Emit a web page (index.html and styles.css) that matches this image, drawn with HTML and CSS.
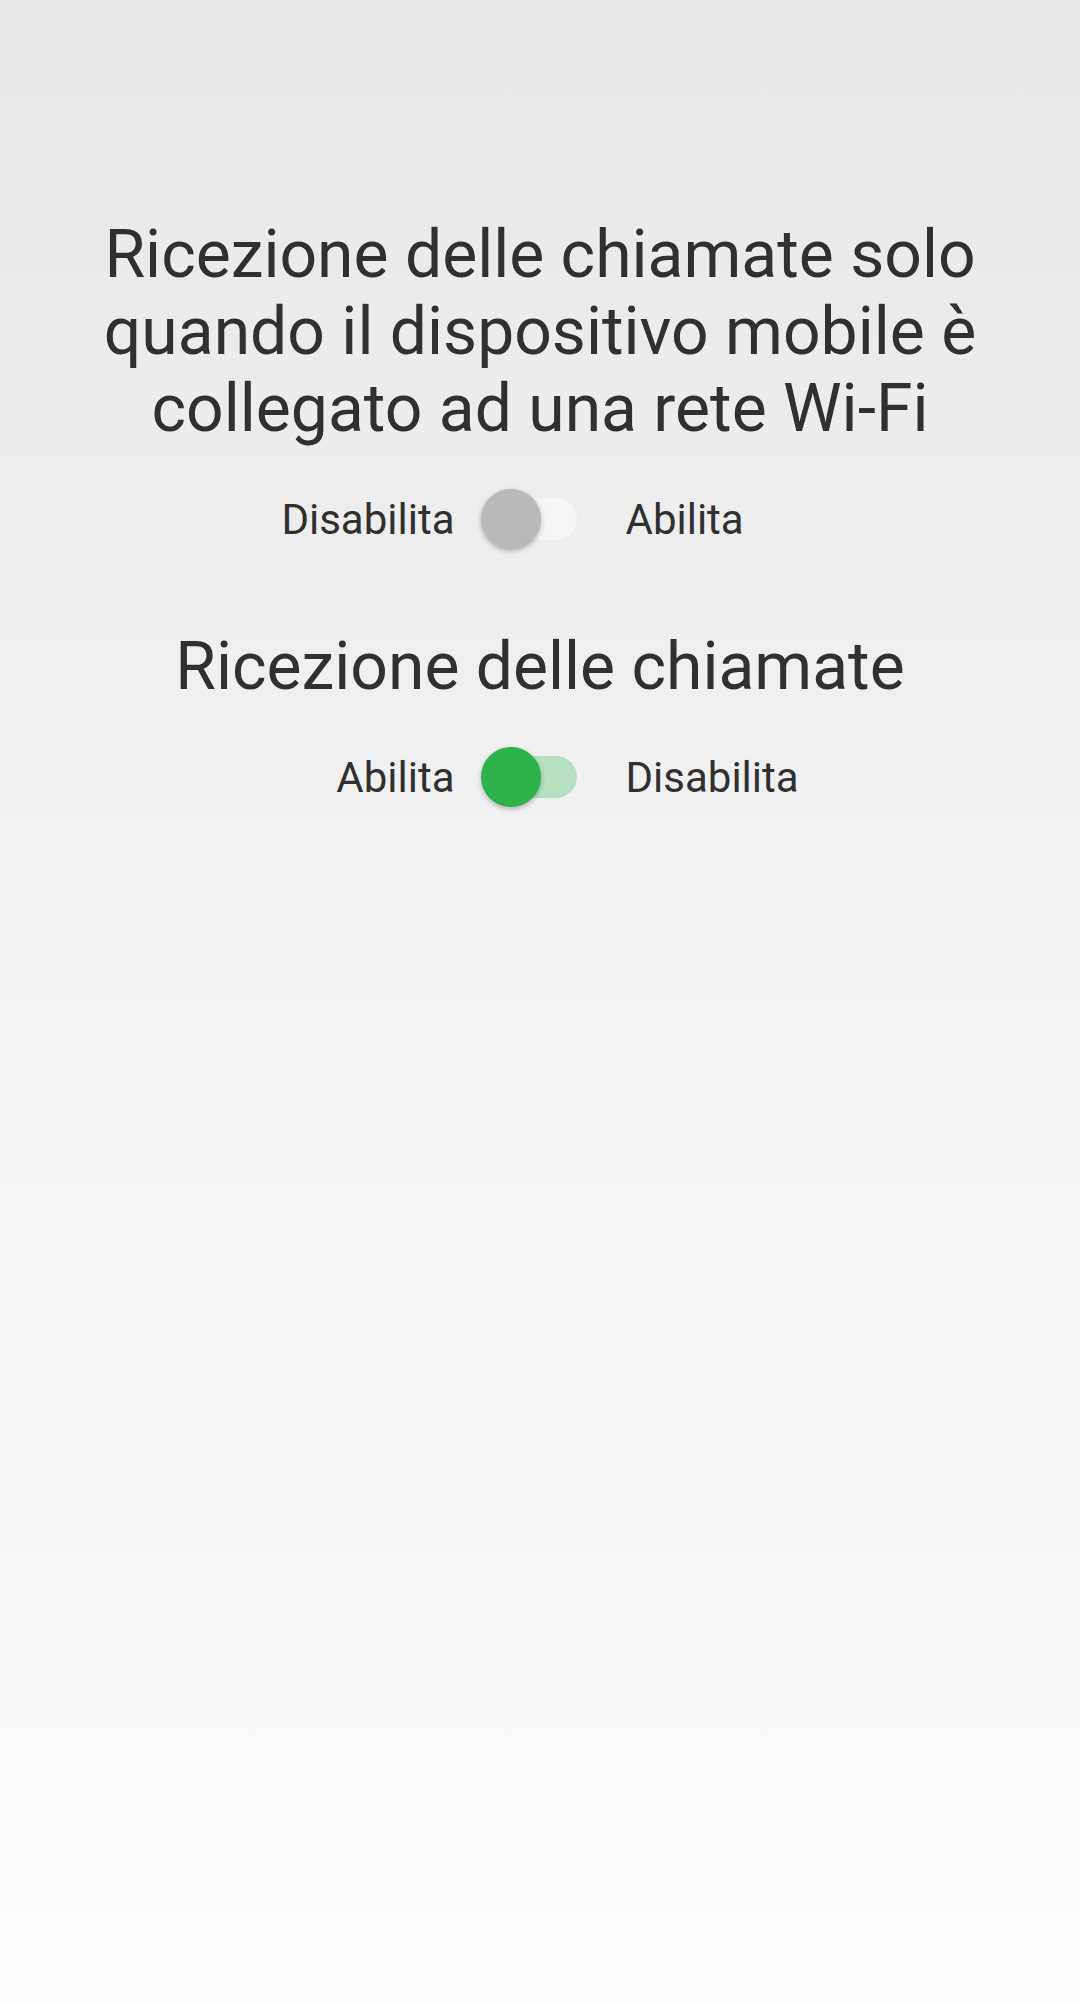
FILE: index.html
```html
<!DOCTYPE html>
<html lang="it">
<head>
    <meta charset="UTF-8">
    <meta name="viewport" content="width=device-width, initial-scale=1.0">
    <title>Ricezione delle chiamate</title>
    <link rel="stylesheet" href="styles.css">
</head>
<body>
    <main class="settings">
        <section class="setting">
            <h1 class="setting-title">Ricezione delle chiamate solo quando il dispositivo mobile è collegato ad una rete Wi-Fi</h1>
            <div class="toggle-row">
                <span class="toggle-label left">Disabilita</span>
                <span class="switch">
                    <span class="track"></span>
                    <span class="thumb"></span>
                </span>
                <span class="toggle-label right">Abilita</span>
            </div>
        </section>

        <section class="setting">
            <h1 class="setting-title">Ricezione delle chiamate</h1>
            <div class="toggle-row">
                <span class="toggle-label left">Abilita</span>
                <span class="switch on">
                    <span class="track"></span>
                    <span class="thumb"></span>
                </span>
                <span class="toggle-label right">Disabilita</span>
            </div>
        </section>
    </main>
</body>
</html>
```

FILE: styles.css
```css
html {
  min-height: 100%;
}

body {
  margin: 0;
  min-height: 2004px;
  font-family: 'Roboto', 'Noto Sans', sans-serif;
  color: #303030;
  background: linear-gradient(180deg, #e8e8e8 0%, #fefefe 100%);
}

.settings {
  display: flex;
  flex-direction: column;
  gap: 79px;
  padding: 216px 48px 0;
}

.setting {
  display: flex;
  flex-direction: column;
  gap: 42px;
}

.setting-title {
  margin: 0;
  font-size: 66px;
  font-weight: 400;
  line-height: 77px;
  text-align: center;
}

.toggle-row {
  display: grid;
  grid-template-columns: 1fr 171px 1fr;
  align-items: center;
  height: 60px;
  margin: 0 -48px;
}

.toggle-label {
  font-size: 42px;
  line-height: 49px;
}

.toggle-label.left {
  text-align: right;
}

.toggle-label.right {
  text-align: left;
}

.switch {
  position: relative;
  height: 60px;
}

.track {
  position: absolute;
  left: 32px;
  top: 9px;
  width: 90px;
  height: 42px;
  border-radius: 21px;
  background: #f5f5f5;
}

.thumb {
  position: absolute;
  left: 26px;
  top: 0;
  width: 60px;
  height: 60px;
  border-radius: 50%;
  background: #b9b9b9;
  box-shadow: 0 2px 5px rgba(0, 0, 0, 0.28);
}

.switch.on .track {
  background: #b6e0bf;
}

.switch.on .thumb {
  background: #2bb24a;
}
```
